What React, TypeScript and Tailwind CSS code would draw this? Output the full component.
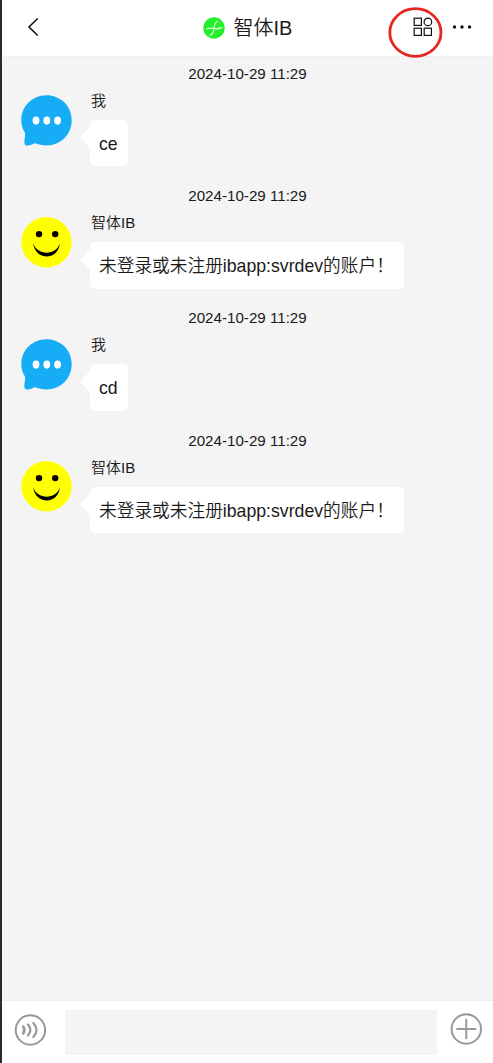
import { useState } from "react";

type Message = {
  id: number;
  time: string;
  sender: string;
  text: string;
  mine: boolean;
};

const MESSAGES: Message[] = [
  { id: 1, time: "2024-10-29 11:29", sender: "我", text: "ce", mine: true },
  { id: 2, time: "2024-10-29 11:29", sender: "智体IB", text: "未登录或未注册ibapp:svrdev的账户！", mine: false },
  { id: 3, time: "2024-10-29 11:29", sender: "我", text: "cd", mine: true },
  { id: 4, time: "2024-10-29 11:29", sender: "智体IB", text: "未登录或未注册ibapp:svrdev的账户！", mine: false },
];

function UserAvatar() {
  return (
    <svg viewBox="0 0 51 51" className="w-[51px] h-[51px] shrink-0">
      <path
        d="M25.5 0.3C11.3 0.3 0.3 11.2 0.3 25.2c0 5 1.4 9 3.7 12.4 0.5 3-0.9 7.2-0.6 10.6 0.2 1.9 1.8 2.5 4 2.3 2.7-0.3 4.2-1.6 7-2.2 3.4 1.4 7 2.1 11.1 2.1 14 0 25.2-11 25.2-25.2S39.5 0.3 25.5 0.3z"
        fill="#17adf6"
      />
      <ellipse cx="15" cy="25.6" rx="3.4" ry="4.1" fill="#fff" />
      <ellipse cx="25.8" cy="25.6" rx="3.4" ry="4.1" fill="#fff" />
      <ellipse cx="36.6" cy="25.6" rx="3.4" ry="4.1" fill="#fff" />
    </svg>
  );
}

function BotAvatar() {
  return (
    <svg viewBox="0 0 51 51" className="w-[51px] h-[51px] shrink-0">
      <circle cx="25.5" cy="25.3" r="25.2" fill="#ffff00" />
      <circle cx="18" cy="17.1" r="3.2" fill="#000" />
      <circle cx="34.2" cy="17.1" r="3.2" fill="#000" />
      <path d="M12 26.3C13.6 35 18.8 39.4 25.7 39.4S37.8 35 39 26.3C36.6 32.6 32 35.7 25.7 35.7S14.7 32.6 12 26.3z" fill="#000" />
    </svg>
  );
}

function ChatRow({ message }: { message: Message }) {
  return (
    <div className="h-[122.2px]">
      <p className="pt-[7px] text-center text-[15.15px] leading-5">{message.time}</p>
      <div className="flex pl-[19px] pt-[5px]">
        <div className="pt-[5.6px]">
          {message.mine ? <UserAvatar /> : <BotAvatar />}
        </div>
        <div className="pl-[7.5px] pt-[2px]">
          <p className="pl-[11.5px] text-[15px] leading-5">{message.sender}</p>
          <div className="flex pt-[9px]">
            {/* Bubble tail */}
            <svg viewBox="0 0 10 22" className="w-[10px] h-[22px] mt-[7px] shrink-0">
              <path d="M10 0L0 10.5L10 21z" fill="#fff" />
            </svg>
            <div className="h-[46.4px] pl-[9.5px] pr-[10.3px] rounded-[5px] bg-white text-[17.7px] leading-[48px] whitespace-nowrap">
              {message.text}
            </div>
          </div>
        </div>
      </div>
    </div>
  );
}

export default function App() {
  const [draft, setDraft] = useState("");

  return (
    <div className="w-full h-[1063px] flex flex-col overflow-hidden border-l-2 border-[#2b2b2e] bg-[#f4f4f4] text-[#1a1a1a] font-[350] font-['Liberation_Sans','Noto_Sans_CJK_SC',sans-serif]">
      <header className="h-[57px] shrink-0 bg-white border-b border-[#eeeeee] flex items-center justify-between">
        <button className="w-[60px] flex pl-[25px] pb-[2px]" aria-label="返回">
          <svg viewBox="0 0 12 20" className="w-3 h-5" fill="none" stroke="#111" strokeWidth="1.6">
            <path d="M10.7 1.5L2 10L10.7 18.5" />
          </svg>
        </button>
        <div className="flex items-center gap-[9px] pl-[61px] pb-px">
          <svg viewBox="0 0 22 22" className="w-[22px] h-[22px]" fill="none">
            <circle cx="11" cy="11" r="10.7" fill="#22f02c" />
            <path d="M3.4 11.8C6.5 11.2 8.5 10.6 11 11.4S15.5 12 18.6 10.6M14.4 4.2C11.6 5.8 11.4 8.4 11.2 11.2C10.8 14.6 9.6 16.8 7 18.2" stroke="#e2ffe2" strokeWidth="1.2" strokeLinecap="round" />
          </svg>
          <h1 className="text-[20px] leading-6 font-[350]">智体IB</h1>
        </div>
        <div className="relative flex items-center w-[121px] h-full pl-[41px] pb-[2px]">
          <svg viewBox="0 0 20 20" className="w-5 h-5" fill="none" stroke="#111" strokeWidth="1.2">
            <rect x="1.2" y="1.2" width="7.2" height="7.2" />
            <circle cx="14.9" cy="4.9" r="3.8" />
            <rect x="1.2" y="11.2" width="7.2" height="7.2" />
            <rect x="11.2" y="11.2" width="7.2" height="7.2" />
          </svg>
          <svg viewBox="0 0 20 4" className="w-5 h-1 ml-[19px]" fill="#111">
            <circle cx="2.5" cy="2" r="1.7" />
            <circle cx="10" cy="2" r="1.7" />
            <circle cx="17.5" cy="2" r="1.7" />
          </svg>
          {/* Highlight ring over the apps button */}
          <svg viewBox="0 0 56 52" className="absolute left-[15px] top-[7px] w-14 h-[52px]" fill="none">
            <ellipse cx="28.4" cy="25.5" rx="25.6" ry="23.8" stroke="#e5281e" strokeWidth="2.8" />
          </svg>
        </div>
      </header>

      <main className="flex-1 min-h-0">
        {MESSAGES.map((m) => (
          <ChatRow key={m.id} message={m} />
        ))}
      </main>

      <footer className="h-[63px] shrink-0 bg-white border-t border-[#eeeeee] flex items-start">
        <button className="pl-[12px] pt-[12.5px]" aria-label="语音">
          <svg viewBox="0 0 32 32" className="w-8 h-8" fill="none" stroke="#999" strokeWidth="2" strokeLinecap="round">
            <circle cx="16.4" cy="16" r="14.7" />
            <path d="M9.2 12.5Q11.5 16 9.2 19.5" strokeWidth="2.6" />
            <path d="M14 10.5Q18.7 16 14 21.5" strokeWidth="2.2" />
            <path d="M19.3 9Q25.7 16 19.3 23" strokeWidth="2.2" />
          </svg>
        </button>
        <input
          value={draft}
          onChange={(e) => setDraft(e.target.value)}
          className="ml-[19px] mt-[9px] w-[372px] h-[45px] px-3 bg-[#f4f4f4] text-base outline-none"
        />
        <button className="pl-[13px] pt-[12px]" aria-label="更多">
          <svg viewBox="0 0 32 32" className="w-8 h-8" fill="none" stroke="#999" strokeWidth="2" strokeLinecap="round">
            <circle cx="16.3" cy="16" r="14.7" />
            <path d="M16.3 6.8V25.2M7.1 16H25.5" />
          </svg>
        </button>
      </footer>
    </div>
  );
}
